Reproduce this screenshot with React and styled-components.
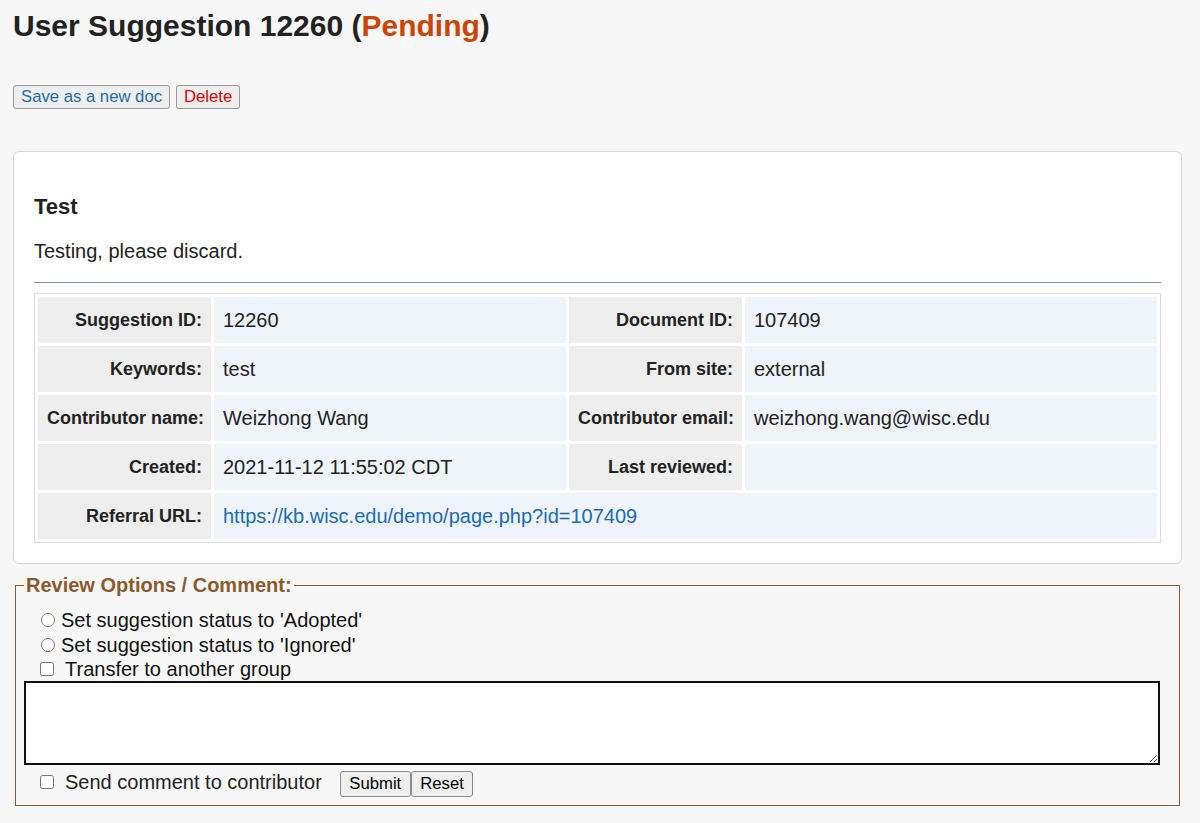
import React from 'react';
import styled, { createGlobalStyle } from 'styled-components';

const GlobalStyle = createGlobalStyle`
  html, body {
    margin: 0;
    padding: 0;
    background: #f7f7f7;
  }
  body {
    font-family: "Liberation Sans", Arial, sans-serif;
    color: #222;
  }
`;

const Page = styled.div`
  padding: 9px 18px 18px 13px;
`;

const Title = styled.h1`
  margin: 0;
  font-size: 30px;
  line-height: 34px;
  font-weight: bold;
  color: #222;
`;

const Status = styled.span`
  color: #cc4400;
`;

const Actions = styled.div`
  margin-top: 42px;
  display: flex;
  gap: 6px;
`;

const ActionButton = styled.button`
  box-sizing: border-box;
  height: 24px;
  font-family: inherit;
  font-size: 16.7px;
  line-height: 20px;
  padding: 1px 7px;
  color: ${props => (props.$danger ? '#dd0000' : '#1b6ca8')};
  background: #efefef;
  border: 1px solid #999;
  border-radius: 3px;
  cursor: pointer;
`;

const Card = styled.div`
  margin-top: 42px;
  background: #fff;
  border: 1px solid #d6d6d6;
  border-radius: 6px;
  padding: 20px;
`;

const CardTitle = styled.h2`
  margin: 22px 0 0;
  font-size: 22px;
  line-height: 25px;
  font-weight: bold;
`;

const CardText = styled.p`
  margin: 21px 0 0;
  font-size: 20px;
  line-height: 23px;
`;

const Rule = styled.hr`
  margin: 19px 0 0;
  border: 0;
  border-top: 1px solid #8094a8;
`;

const InfoTable = styled.table`
  margin-top: 10px;
  width: 100%;
  table-layout: fixed;
  border: 1px solid #dcdcdc;
  border-collapse: separate;
  border-spacing: 3px;
`;

const Label = styled.th`
  height: 46px;
  padding: 0 9px;
  background: #eeeeee;
  text-align: right;
  white-space: nowrap;
  font-size: 18px;
  font-weight: bold;
  color: #222;
  vertical-align: middle;
`;

const Value = styled.td`
  height: 46px;
  padding: 0 9px;
  background: #eff3fa;
  font-size: 20px;
  line-height: 23px;
  color: #222;
  vertical-align: middle;
`;

const Link = styled.a`
  color: #1a6cb5;
  text-decoration: none;
`;

const Review = styled.fieldset`
  margin: 10px 2px 0;
  padding: 0 19px 8px 8px;
  border: 1px solid #8a5a2c;
  min-width: 0;
`;

const Legend = styled.legend`
  padding: 0 2px;
  font-size: 20px;
  line-height: 23px;
  font-weight: bold;
  color: #8a5a2c;
`;

const Options = styled.div`
  margin-top: 11px;
  padding-left: 17px;
`;

const OptionRow = styled.label`
  display: block;
  font-size: 20px;
  line-height: ${props => (props.$tight ? '23px' : '25px')};
  color: #111;
`;

const Radio = styled.input.attrs({ type: 'radio' })`
  width: 14px;
  height: 14px;
  margin: 0 6px 0 0;
  vertical-align: baseline;
`;

const Check = styled.input.attrs({ type: 'checkbox' })`
  width: 14px;
  height: 14px;
  margin: 0 11px ${props => (props.$lift ? '2px' : '0')} -1px;
  vertical-align: baseline;
`;

const Comment = styled.textarea`
  display: block;
  box-sizing: border-box;
  width: 100%;
  height: 84px;
  margin: 0;
  border: 2px solid #111;
  background: #fff;
  font-family: inherit;
  font-size: 16px;
`;

const SubmitRow = styled.div`
  margin-top: 6px;
  padding-left: 17px;
  font-size: 20px;
  color: #222;
`;

const SendLabel = styled.label`
  margin-right: 18px;
`;

const FormButton = styled.button`
  font-family: inherit;
  font-size: 16.7px;
  line-height: 20px;
  padding: 2px 8.5px;
  color: #000;
  background: #efefef;
  border: 1px solid #8a8a8a;
  border-radius: 3px;
  vertical-align: baseline;
`;

const details = [
  ['Suggestion ID:', '12260', 'Document ID:', '107409'],
  ['Keywords:', 'test', 'From site:', 'external'],
  ['Contributor name:', 'Weizhong Wang', 'Contributor email:', 'weizhong.wang@wisc.edu'],
  ['Created:', '2021-11-12 11:55:02 CDT', 'Last reviewed:', ''],
];

const App = () => {
  return (
    <Page>
      <GlobalStyle />
      <Title>
        User Suggestion 12260 (<Status>Pending</Status>)
      </Title>

      <Actions>
        <ActionButton>Save as a new doc</ActionButton>
        <ActionButton $danger>Delete</ActionButton>
      </Actions>

      <Card>
        <CardTitle>Test</CardTitle>
        <CardText>Testing, please discard.</CardText>
        <Rule />
        <InfoTable>
          <colgroup>
            <col style={{ width: '173px' }} />
            <col style={{ width: '352px' }} />
            <col style={{ width: '173px' }} />
            <col />
          </colgroup>
          <tbody>
            {details.map(([l1, v1, l2, v2]) => (
              <tr key={l1}>
                <Label>{l1}</Label>
                <Value>{v1}</Value>
                <Label>{l2}</Label>
                <Value>{v2}</Value>
              </tr>
            ))}
            <tr>
              <Label>Referral URL:</Label>
              <Value colSpan={3}>
                <Link href="#">https://kb.wisc.edu/demo/page.php?id=107409</Link>
              </Value>
            </tr>
          </tbody>
        </InfoTable>
      </Card>

      <Review>
        <Legend>Review Options / Comment:</Legend>
        <Options>
          <OptionRow>
            <Radio name="status" />Set suggestion status to 'Adopted'
          </OptionRow>
          <OptionRow>
            <Radio name="status" />Set suggestion status to 'Ignored'
          </OptionRow>
          <OptionRow $tight>
            <Check />Transfer to another group
          </OptionRow>
        </Options>
        <Comment />
        <SubmitRow>
          <SendLabel>
            <Check $lift />Send comment to contributor
          </SendLabel>
          <FormButton>Submit</FormButton>
          <FormButton>Reset</FormButton>
        </SubmitRow>
      </Review>
    </Page>
  );
};

export default App;
